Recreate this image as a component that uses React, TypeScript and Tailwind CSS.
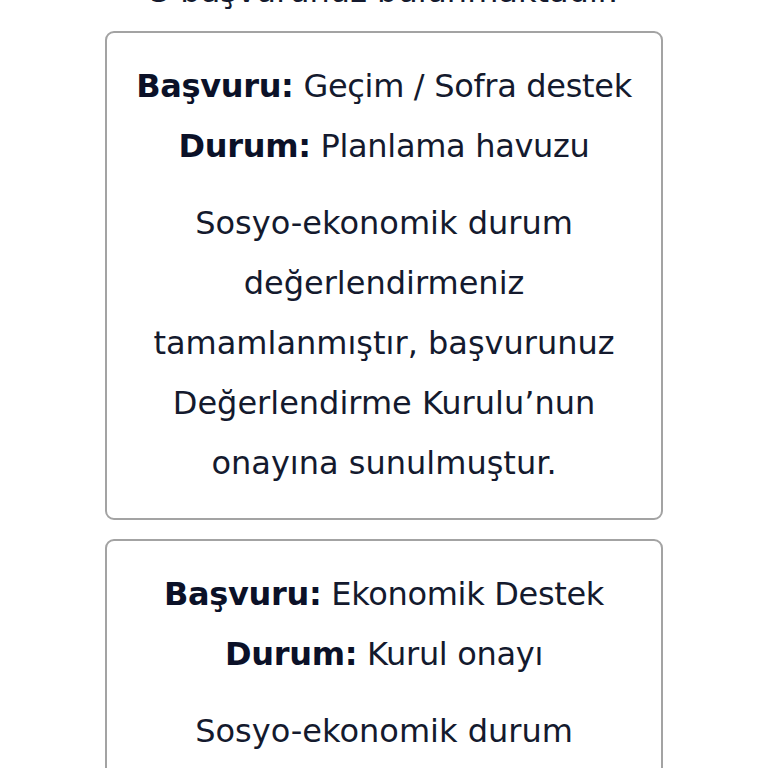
const applications = [
  {
    type: "Geçim / Sofra destek",
    status: "Planlama havuzu",
    lines: [
      "Sosyo-ekonomik durum",
      "değerlendirmeniz",
      "tamamlanmıştır, başvurunuz",
      "Değerlendirme Kurulu’nun",
      "onayına sunulmuştur.",
    ],
  },
  {
    type: "Ekonomik Destek",
    status: "Kurul onayı",
    lines: [
      "Sosyo-ekonomik durum",
      "değerlendirmeniz",
      "tamamlanmıştır, başvurunuz",
      "Değerlendirme Kurulu’nun",
      "onayına sunulmuştur.",
    ],
  },
];

function ApplicationCard({ type, status, lines }: { type: string; status: string; lines: string[] }) {
  return (
    <div className="rounded-[9px] border-2 border-[#a3a3a3] bg-white px-4 pt-[23px] pb-[25px] text-center">
      <p className="leading-[60px] whitespace-nowrap tracking-[-0.01em]">
        <span className="font-bold text-[#0b1128]">Başvuru:</span> {type}
      </p>
      <p className="leading-[60px] whitespace-nowrap tracking-[-0.01em]">
        <span className="font-bold text-[#0b1128]">Durum:</span> {status}
      </p>
      <div className="mt-[17px] leading-[60px]">
        {lines.map((line) => (
          <p key={line} className="whitespace-nowrap">
            {line}
          </p>
        ))}
      </div>
    </div>
  );
}

export default function App() {
  return (
    <div
      className="h-[768px] overflow-hidden bg-white text-[32px] text-[#141a2e]"
      style={{ fontFamily: '"DejaVu Sans", "Noto Sans", sans-serif' }}
    >
      <p className="-mt-[39px] text-center leading-[60px] whitespace-nowrap">3 başvurunuz bulunmaktadır.</p>
      <div className="mx-[105px] mt-[10px] flex flex-col gap-[19px]">
        {applications.map((app) => (
          <ApplicationCard key={app.type} {...app} />
        ))}
      </div>
    </div>
  );
}
